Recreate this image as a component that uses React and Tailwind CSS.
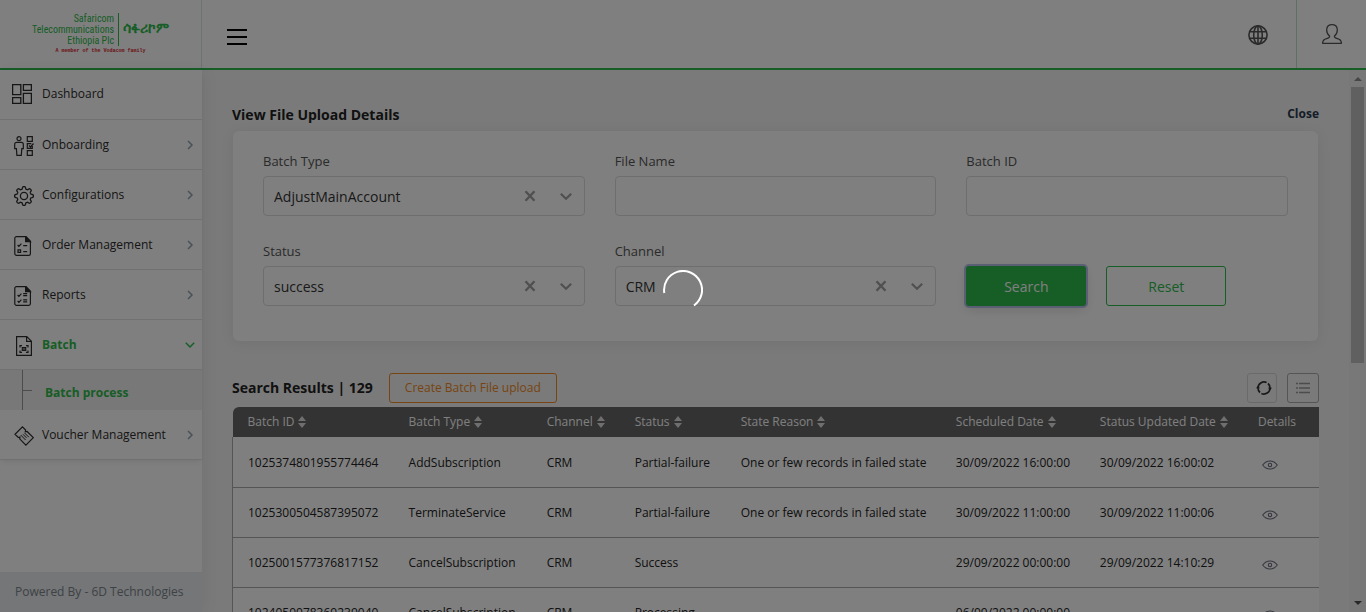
import React from 'react';

const nav = [
  { label: 'Onboarding', icon: 'people' },
  { label: 'Configurations', icon: 'gear' },
  { label: 'Order Management', icon: 'order' },
  { label: 'Reports', icon: 'report' },
];

const columns = [
  ['Batch ID', 'w-[161px]', true],
  ['Batch Type', 'w-[138px]', true],
  ['Channel', 'w-[88px]', true],
  ['Status', 'w-[106px]', true],
  ['State Reason', 'w-[215px]', true],
  ['Scheduled Date', 'w-[144px]', true],
  ['Status Updated Date', 'w-[158px]', true],
  ['Details', 'w-[76px]', false],
];

const rows = [
  ['1025374801955774464', 'AddSubscription', 'CRM', 'Partial-failure', 'One or few records in failed state', '30/09/2022 16:00:00', '30/09/2022 16:00:02'],
  ['1025300504587395072', 'TerminateService', 'CRM', 'Partial-failure', 'One or few records in failed state', '30/09/2022 11:00:00', '30/09/2022 11:00:06'],
  ['1025001577376817152', 'CancelSubscription', 'CRM', 'Success', '', '29/09/2022 00:00:00', '29/09/2022 14:10:29'],
  ['1024050078369239040', 'CancelSubscription', 'CRM', 'Processing', '', '06/09/2022 00:00:00', ''],
];

function gearPath() {
  const pts = [];
  const n = 96;
  for (let i = 0; i < n; i++) {
    const a = (i / n) * Math.PI * 2;
    const r = 8.2 + 1.2 * Math.tanh(2.2 * Math.cos(8 * a));
    pts.push(`${(10 + r * Math.sin(a)).toFixed(2)} ${(10 - r * Math.cos(a)).toFixed(2)}`);
  }
  return `M${pts.join('L')}Z`;
}

function NavIcon({ name }) {
  const common = { viewBox: '0 0 20 20', width: 20, height: 20, fill: 'none', stroke: '#2c2c2c', strokeWidth: 1.2, 'aria-hidden': true };
  if (name === 'dashboard') {
    return (
      <svg {...common} strokeWidth="1.3">
        <path d="M.6.6h8.2v10H.6zM11.4.6h8v5.8h-8zM.6 13.6h8.2v5.8H.6zM11.4 9.4h8v10h-8z" />
      </svg>
    );
  }
  if (name === 'people') {
    return (
      <svg {...common}>
        <circle cx="5" cy="2.7" r="2" />
        <path d="M2.6 6.4h4.8c1.2 0 1.9.8 1.9 1.9v4.4H7.8l-.5 6.7H2.9l-.5-6.7H.7V8.3c0-1.1.7-1.9 1.9-1.9z" />
        <path d="M13.3.7h5v4.6h-5zM18.3 10v2.3h-5V7.7h4M13.3 14.7h5v4.6h-5zM15 9.5l1.5 1.5 3-3.5" />
      </svg>
    );
  }
  if (name === 'gear') {
    return (
      <svg {...common} strokeWidth="1.3">
        <path d={gearPath()} />
        <circle cx="10" cy="10" r="3.6" />
      </svg>
    );
  }
  if (name === 'voucher') {
    return (
      <svg {...common}>
        <path d="M8.5.9l3.1 3.1-.3 1.8 1.8-.3 6.2 6.2-7.4 7.4-6.2-6.2.3-1.7-1.8.2L1 8.3z" />
        <path d="M6.7 9l4.900 5M9 8.3l3.500 3.600M10.500 6.900l4.300 4.300" strokeWidth="1" />
      </svg>
    );
  }
  if (name === 'batch') {
    return (
      <svg {...common}>
        <path d="M2.6.6h10.2l4.6 4.6v14.2H2.6zM12.6.8v4.6h4.6" />
        <path d="M6 11.5V9.6h2M12 9.6h2v1.9M14 14.5v1.9h-2M8 16.4H6v-1.9M8.3 11.5h3.4v3H8.3zM10 11v4" />
      </svg>
    );
  }
  return (
    <svg {...common}>
      <path d="M2.5.7h9.6l4.3 4.5v12.6c0 .9-.6 1.5-1.5 1.5H2.5c-.9 0-1.7-.6-1.7-1.5V2.3C.8 1.3 1.5.7 2.5.7z" />
      <path d="M11.6.8v4.9h4.8z" fill="#2c2c2c" />
      <path d="M3.6 9l1.3 1.3 2.5-2.6M9.2 9.6h4" />
      {name === 'report' ? (
        <path d="M9.2 7.6h4M3.6 15l1.3 1.3 2.5-2.6M9.2 13.8h4M9.2 15.8h4" />
      ) : (
        <path d="M4 13.8h2.6v2.6H4zM9.2 15.7h4" />
      )}
    </svg>
  );
}

function Chevron({ down, className }) {
  return (
    <svg className={className} viewBox="0 0 10 10" width="10" height="10" fill="none" stroke="currentColor" strokeWidth="1.5" aria-hidden="true">
      <path d={down ? 'M.8 2.8L5 7l4.2-4.2' : 'M3 1l4 4-4 4'} />
    </svg>
  );
}

function NavItem({ label, icon, active }) {
  return (
    <li>
      <a href="#" className={`flex h-[50px] items-center border-b border-[#e2e2e2] pr-[7px] pl-[14px] text-[12px] ${active ? 'font-bold text-[#2eba4c]' : 'text-[#2c2c2c]'}`}>
        <span className="mr-2 pt-0.5"><NavIcon name={icon} /></span>
        <span className="flex-1">{label}</span>
        <Chevron down={active} className={active ? '' : 'text-[#8fa3ad]'} />
      </a>
    </li>
  );
}

function Field({ id, label, value }) {
  return (
    <div className="flex flex-col gap-[5px]">
      <label htmlFor={id} className="text-[13px] leading-5 text-[#555]">{label}</label>
      {value ? (
        <div className="relative">
          <select id={id} defaultValue={value} className="h-10 w-full appearance-none rounded border border-[#dcdcdc] bg-white pr-20 pl-[10px] text-[14px] text-[#333]">
            <option>{value}</option>
          </select>
          <button type="button" aria-label={`Clear ${label}`} className="absolute top-[14px] right-[49px]">
            <svg viewBox="0 0 12 12" width="12" height="12" fill="none" stroke="#a0a0a0" strokeWidth="2.4" aria-hidden="true"><path d="M1.5 1.2l9 9.6M10.5 1.2l-9 9.6" /></svg>
          </button>
          <svg className="pointer-events-none absolute top-[14px] right-[13px]" viewBox="0 0 12 12" width="12" height="12" fill="none" stroke="#a0a0a0" strokeWidth="2.2" aria-hidden="true"><path d="M.8 3.7L6 8.7l5.2-5" /></svg>
        </div>
      ) : (
        <input id={id} type="text" className="h-10 w-full rounded border border-[#dcdcdc] bg-white px-[10px] text-[14px]" />
      )}
    </div>
  );
}

function SortIcon() {
  return (
    <svg className="shrink-0" viewBox="0 0 8 12" width="8" height="12" fill="#dedede" aria-hidden="true">
      <path d="M4 0l4 5H0zM4 12l4-5H0z" />
    </svg>
  );
}

export default function App() {
  return (
    <div className="flex h-screen flex-col overflow-hidden bg-[#f4f4f4] font-['Open_Sans',sans-serif] text-[#222]">
      <header className="flex h-[70px] shrink-0 border-b-2 border-[#2eba4c] bg-white">
        <div className="flex w-[202px] shrink-0 flex-col items-center border-r border-[#dbe8e0] pt-[13px]">
          <div className="flex items-center gap-1 text-[#2eba4c]">
            <div className="border-r border-[#2eba4c] pr-1 text-right font-['Liberation_Sans_Narrow','Roboto_Condensed','Liberation_Sans',sans-serif] text-[10px] leading-[11px]">
              <div>Safaricom</div>
              <div>Telecommunications</div>
              <div>Ethiopia Plc</div>
            </div>
            <div className="pb-1 text-[14px] leading-5 font-bold" lang="am">ሳፋሪኮም</div>
          </div>
          <div className="font-['Liberation_Mono',monospace] text-[5px] leading-[10px] font-bold text-[#d8232f]">A member of the Vodacom family</div>
        </div>
        <button type="button" aria-label="Toggle menu" className="ml-[25px] pt-1.5">
          <svg viewBox="0 0 20 16" width="20" height="16" stroke="#000" strokeWidth="2" aria-hidden="true"><path d="M0 1h20M0 8h20M0 15h20" /></svg>
        </button>
        <div className="flex-1" />
        <button type="button" aria-label="Language" className="pt-0.5 pr-[28px]">
          <svg viewBox="0 0 20 20" width="20" height="20" fill="none" stroke="#555" strokeWidth="1.6" aria-hidden="true">
            <circle cx="10" cy="10" r="9.1" />
            <ellipse cx="10" cy="10" rx="4.3" ry="9.1" />
            <path d="M10 .8v18.4M1.5 6.8h17M1.5 13.2h17" />
          </svg>
        </button>
        <button type="button" aria-label="Profile" className="flex w-[70px] items-center justify-center border-l border-[#bfe3c8]">
          <svg viewBox="0 0 20 20" width="20" height="20" fill="none" stroke="#555" strokeWidth="1.3" strokeLinejoin="round" aria-hidden="true">
            <path d="M7.6 12C3.600 9 3.2.7 10 .7s6.400 8.300 2.400 11.300c-.2 1.600.6 2 3 2.600 2.800.7 4 1.700 4 4.700H.6c0-3 1.200-4 4-4.700 2.400-.6 3.200-1 3-2.600z" />
          </svg>
        </button>
      </header>

      <div className="flex min-h-0 flex-1">
        <aside className="flex w-[202px] shrink-0 flex-col bg-white shadow-[2px_0_16px_rgba(0,0,0,0.06)]">
          <nav className="flex-1">
            <ul className="shadow-md shadow-black/5">
              <li>
                <a href="#" className="flex h-[50px] items-center gap-[10px] border-b border-[#e2e2e2] pb-0.5 pl-3 text-[12px] text-[#2c2c2c]">
                  <NavIcon name="dashboard" />
                  Dashboard
                </a>
              </li>
              {nav.map((n) => <NavItem key={n.label} {...n} />)}
              <NavItem label="Batch" icon="batch" active />
              <li className="flex h-10 bg-[#f0f0f0] pl-[22px]">
                <span className="flex w-[10px] items-center border-l border-[#999]"><span className="h-px w-full bg-[#999]" /></span>
                <a href="#" className="flex items-center pt-1.5 pl-[13px] text-[12px] font-bold text-[#2eba4c]">Batch process</a>
              </li>
              <NavItem label="Voucher Management" icon="voucher" />
            </ul>
          </nav>
          <footer className="flex h-10 items-center bg-[#e9ecef] pl-[15px] text-[12px] text-[#7c848c]">Powered By - 6D Technologies</footer>
        </aside>

        <main className="min-w-0 flex-1 overflow-hidden px-[30px] pt-[34px]">
          <div className="flex h-[22px] items-center justify-between pb-0.5">
            <h1 className="text-[14px] font-bold">View File Upload Details</h1>
            <a href="#" className="text-[12px] font-bold text-[#2a3a4f]">Close</a>
          </div>

          <form className="mx-px mt-[5px] grid grid-cols-3 gap-x-[30px] gap-y-[25px] rounded-md bg-white px-[30px] pt-5 pb-[35px] shadow-[0_2px_14px_rgba(0,0,0,0.07)]">
            <Field id="type" label="Batch Type" value="AdjustMainAccount" />
            <Field id="file" label="File Name" />
            <Field id="batch" label="Batch ID" />
            <Field id="status" label="Status" value="success" />
            <Field id="channel" label="Channel" value="CRM" />
            <div className="flex items-end gap-5">
              <button type="button" className="h-10 w-[120px] rounded-[3px] bg-[#2eba4c] text-[14px] text-white shadow-[0_0_0_2px_#b4bee6,0_4px_12px_rgba(0,0,0,0.12)]">Search</button>
              <button type="button" className="h-10 w-[120px] rounded-[3px] border border-[#2eba4c] text-[14px] text-[#2eba4c]">Reset</button>
            </div>
          </form>

          <div className="mt-8 flex items-center">
            <h2 className="mr-4 pb-0.5 text-[14px] font-bold">Search Results | 129</h2>
            <button type="button" className="h-[30px] rounded-[3px] border border-[#f08a24] px-[15px] text-[12px] text-[#f08a24]">Create Batch File upload</button>
            <div className="flex-1" />
            <button type="button" aria-label="Refresh" className="mr-[10px] flex h-[30px] w-[30px] items-center justify-center rounded-[3px] border border-[#d5d5d5] pl-1">
              <svg viewBox="0 0 16 16" width="16" height="16" fill="none" stroke="#333" strokeWidth="1.7" aria-hidden="true">
                <path d="M2 8A6 6 0 0 1 10.600 2.600M12 3.500A6 6 0 0 1 14 8A6 6 0 0 1 14 8M14 8A6 6 0 0 1 5.400 13.400M4 12.500A6 6 0 0 1 2 8" />
                <path d="M0 8.300L2 5.800l2 2.500zM16 7.700l-2 2.500-2-2.500z" fill="#333" stroke="none" />
              </svg>
            </button>
            <button type="button" aria-label="List view" className="flex h-[30px] w-8 items-center justify-center rounded-[3px] border border-[#aaa]">
              <svg viewBox="0 0 14 12" width="14" height="12" stroke="#999" strokeWidth="1.3" aria-hidden="true"><path d="M0 1.5h2M3 1.5h11M0 6h2M3 6h11M0 10.5h2M3 10.5h11" /></svg>
            </button>
          </div>

          <table className="mt-1 w-full table-fixed text-left text-[12px]">
            <thead>
              <tr className="h-[30px] text-white">
                {columns.map(([name, width, sortable]) => (
                  <th key={name} scope="col" className={`${width} bg-[#666] pl-[15px] font-normal whitespace-nowrap first:rounded-tl-md`}>
                    <span className="flex items-center gap-1">{name}{sortable && <SortIcon />}</span>
                  </th>
                ))}
              </tr>
            </thead>
            <tbody>
              {rows.map((row) => (
                <tr key={row[0]} className="h-[50px] border-b border-l border-[#aaa] bg-white">
                  {row.map((cell, i) => <td key={i} className="pt-0.5 pl-[15px] whitespace-nowrap">{cell}</td>)}
                  <td className="pl-[19px]">
                    <button type="button" aria-label="View details" className="block pt-1.5">
                      <svg viewBox="0 0 16 10" width="16" height="10" fill="none" stroke="#6b7080" strokeWidth="1.1" aria-hidden="true">
                        <path d="M.7 5C4.5-.4 11.5-.4 15.3 5 11.5 10.4 4.5 10.4.7 5z" />
                        <circle cx="8" cy="5" r="1.7" />
                      </svg>
                    </button>
                  </td>
                </tr>
              ))}
            </tbody>
          </table>
        </main>

        <div className="flex w-[17px] shrink-0 flex-col items-center bg-[#f1f1f1]" aria-hidden="true">
          <svg viewBox="0 0 17 17" width="17" height="17" fill="#8c8c8c"><path d="M5 11h8L9 7z" /></svg>
          <div className="h-[51%] w-[13px] bg-[#c1c1c1]" />
          <div className="flex-1" />
          <svg viewBox="0 0 17 17" width="17" height="17" fill="#505050"><path d="M5 6h8l-4 4z" /></svg>
        </div>
      </div>

      <div className="fixed inset-0 flex items-center justify-center bg-black/50 pb-8" role="status" aria-label="Loading">
        <svg viewBox="0 0 40 40" width="40" height="40" fill="none" stroke="#fff" strokeWidth="2" aria-hidden="true">
          <path d="M1.3 23A19 19 0 1 1 31 35.5" />
        </svg>
      </div>
    </div>
  );
}
